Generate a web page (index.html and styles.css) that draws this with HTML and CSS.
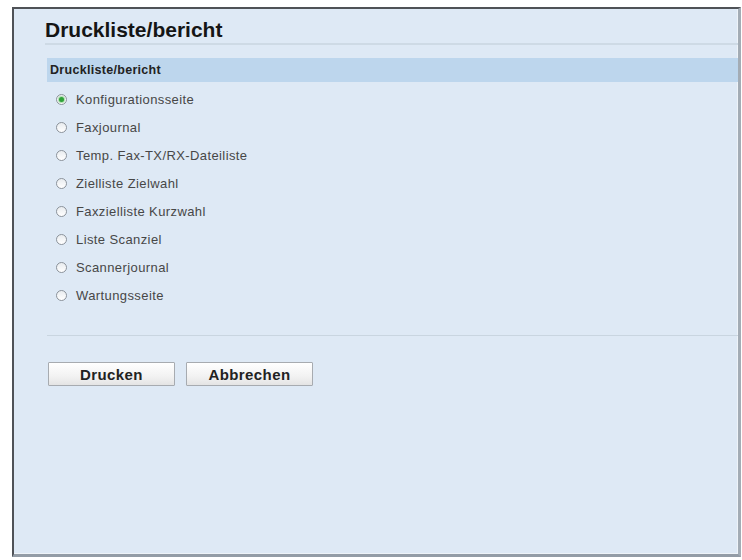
FILE: index.html
```html
<!DOCTYPE html>
<html lang="de">
<head>
    <meta charset="UTF-8">
    <meta name="viewport" content="width=device-width, initial-scale=1.0">
    <title>Druckliste/bericht</title>
    <link rel="stylesheet" href="styles.css">
</head>
<body>
    <div class="frame">
        <div class="content">
            <h1 class="page-title">Druckliste/bericht</h1>

            <div class="section-head">Druckliste/bericht</div>
            <ul class="report-list">
                <li class="report-item"><span class="radio checked"></span>Konfigurationsseite</li>
                <li class="report-item"><span class="radio"></span>Faxjournal</li>
                <li class="report-item"><span class="radio"></span>Temp. Fax-TX/RX-Dateiliste</li>
                <li class="report-item"><span class="radio"></span>Zielliste Zielwahl</li>
                <li class="report-item"><span class="radio"></span>Faxzielliste Kurzwahl</li>
                <li class="report-item"><span class="radio"></span>Liste Scanziel</li>
                <li class="report-item"><span class="radio"></span>Scannerjournal</li>
                <li class="report-item"><span class="radio"></span>Wartungsseite</li>
            </ul>

            <div class="divider"></div>

            <div class="actions">
                <button class="btn">Drucken</button>
                <button class="btn">Abbrechen</button>
            </div>
        </div>
    </div>
</body>
</html>
```

FILE: styles.css
```css
body {
    margin: 0;
    padding: 0;
    background-color: #fff;
    font-family: "Liberation Sans", Arial, sans-serif;
}

.frame {
    margin: 7px 1px 0 12px;
    height: 545px;
    background-color: #dee9f5;
    border-top: 2px solid #4f5257;
    border-left: 2px solid #4f5257;
    border-right: 3px solid #a3acb5;
    border-bottom: 3px solid #939ca6;
    box-shadow: inset -1px -1px 0 #eef3f8;
}

.content {
    padding: 9px 0 0 33px;
}

.page-title {
    margin: 0 0 0 -2px;
    padding-bottom: 1px;
    font-size: 21px;
    line-height: 24px;
    font-weight: bold;
    color: #151515;
    border-bottom: 2px solid #cedae5;
}

.section-head {
    margin-top: 13px;
    height: 24px;
    line-height: 24px;
    padding-left: 3px;
    background-color: #bdd6ed;
    font-size: 12.5px;
    font-weight: bold;
    letter-spacing: 0.3px;
    color: #222;
}

.report-list {
    list-style: none;
    margin: 0;
    padding: 3px 0 0 0;
}

.report-item {
    display: flex;
    align-items: center;
    height: 28px;
    padding-left: 9px;
    font-size: 13px;
    letter-spacing: 0.4px;
    color: #474747;
}

.radio {
    width: 9px;
    height: 9px;
    margin-right: 9px;
    border: 1px solid #8c939b;
    border-radius: 50%;
    background: linear-gradient(#e9ecef, #fff);
    display: flex;
    align-items: center;
    justify-content: center;
}

.radio.checked::after {
    content: "";
    width: 5px;
    height: 5px;
    border-radius: 50%;
    background-color: #2fa23a;
    box-shadow: 0 0 1px 1px #a6dca9;
}

.divider {
    margin-top: 26px;
    border-top: 1px solid #c9d5e0;
}

.actions {
    display: flex;
    gap: 11px;
    margin-top: 26px;
    padding-left: 1px;
}

.btn {
    width: 127px;
    height: 24px;
    padding: 0;
    border: 1px solid #a7abb0;
    border-radius: 1px;
    background: linear-gradient(#fff, #f2f2f2 60%, #e4e4e4);
    font-family: "Liberation Sans", Arial, sans-serif;
    font-size: 15px;
    font-weight: bold;
    letter-spacing: 0.4px;
    color: #222;
    cursor: pointer;
}
```
